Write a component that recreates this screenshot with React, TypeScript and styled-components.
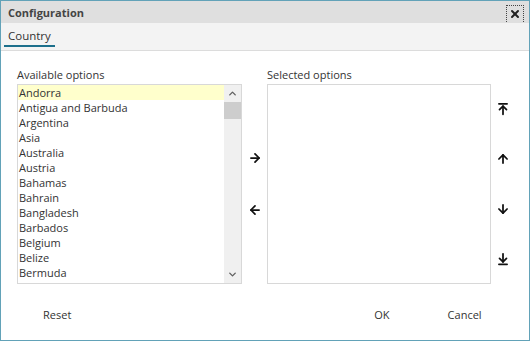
import React from 'react'
import styled, { createGlobalStyle } from 'styled-components'
import { ArrowRight, ArrowLeft, ArrowUp, ArrowDown, ArrowUpToLine, ArrowDownToLine, X, ChevronUp, ChevronDown } from 'lucide-react'

const GlobalStyle = createGlobalStyle`
  body {
    margin: 0;
    font-family: "Open Sans", "Liberation Sans", sans-serif;
    color: #333;
  }
  * { box-sizing: border-box; }
`

const Dialog = styled.div`
  width: 530px;
  height: 341px;
  border: 1px solid #62a2b8;
  background: #fff;
  display: flex;
  flex-direction: column;
`

const TitleBar = styled.div`
  height: 22px;
  background: #dfdfdf;
  display: flex;
  align-items: center;
  justify-content: space-between;
  padding: 0 5px 0 7px;
  font-size: 11px;
  font-weight: bold;
  color: #444;
`

const CloseButton = styled.button`
  width: 18px;
  height: 19px;
  margin-top: 4px;
  border: 1px dotted #444;
  background: transparent;
  display: flex;
  align-items: center;
  justify-content: center;
  padding: 0;
  color: #222;
`

const TabBar = styled.div`
  height: 28px;
  background: #f3f3f3;
  border-bottom: 1px solid #dcdcdc;
  display: flex;
  align-items: flex-end;
  padding-left: 3px;
`

const Tab = styled.div`
  font-size: 11.5px;
  padding: 0 4px 1px;
  margin-bottom: 3px;
  border-bottom: 2px solid #1c6f8b;
  color: #333;
  line-height: 16px;
`

const Body = styled.div`
  display: flex;
  padding: 17px 0 0 16px;
`

const Column = styled.div`
  display: flex;
  flex-direction: column;
`

const Label = styled.div`
  font-size: 11px;
  line-height: 14px;
  height: 16px;
  color: #333;
`

const ListBox = styled.div<{ $width: number }>`
  width: ${p => p.$width}px;
  height: 200px;
  border: 1px solid #d8d8d8;
  display: flex;
  overflow: hidden;
`

const Items = styled.div`
  flex: 1;
  display: flex;
  flex-direction: column;
`

const Item = styled.div<{ $active?: boolean }>`
  height: 15px;
  line-height: 15px;
  font-size: 11px;
  padding-left: 1px;
  white-space: nowrap;
  background: ${p => (p.$active ? '#ffffcc' : 'transparent')};
  color: #333;
`

const Scrollbar = styled.div`
  width: 17px;
  background: #f0f0f0;
  display: flex;
  flex-direction: column;
  align-items: center;
  color: #606060;
`

const ScrollArrow = styled.div`
  height: 17px;
  width: 17px;
  display: flex;
  align-items: center;
  justify-content: center;
`

const Thumb = styled.div`
  width: 17px;
  height: 17px;
  background: #cdcdcd;
`

const ScrollSpace = styled.div`
  flex: 1;
`

const MoveColumn = styled.div`
  width: 25px;
  margin-top: 16px;
  height: 200px;
  display: flex;
  flex-direction: column;
  align-items: center;
  justify-content: center;
  gap: 38px;
  color: #111;
`

const OrderColumn = styled.div`
  width: 24px;
  margin-top: 16px;
  height: 200px;
  display: flex;
  flex-direction: column;
  align-items: center;
  padding-top: 18px;
  gap: 36px;
  color: #111;
`

const Footer = styled.div`
  display: flex;
  align-items: center;
  margin-top: 20px;
  height: 20px;
  font-size: 11px;
`

const FooterButton = styled.button<{ $ml: number }>`
  margin-left: ${p => p.$ml}px;
  background: transparent;
  border: none;
  padding: 0;
  font-family: "Open Sans", "Liberation Sans", sans-serif;
  font-size: 11px;
  color: #333;
`

const countries = [
  'Andorra',
  'Antigua and Barbuda',
  'Argentina',
  'Asia',
  'Australia',
  'Austria',
  'Bahamas',
  'Bahrain',
  'Bangladesh',
  'Barbados',
  'Belgium',
  'Belize',
  'Bermuda',
]

const App = () => {
  return (
    <>
      <GlobalStyle />
      <Dialog>
        <TitleBar>
          <span>Configuration</span>
          <CloseButton>
            <X size={12} strokeWidth={4} />
          </CloseButton>
        </TitleBar>
        <TabBar>
          <Tab>Country</Tab>
        </TabBar>
        <Body>
          <Column>
            <Label>Available options</Label>
            <ListBox $width={225}>
              <Items>
                {countries.map((c, i) => (
                  <Item key={c} $active={i === 0}>{c}</Item>
                ))}
              </Items>
              <Scrollbar>
                <ScrollArrow><ChevronUp size={11} strokeWidth={3} /></ScrollArrow>
                <Thumb />
                <ScrollSpace />
                <ScrollArrow><ChevronDown size={11} strokeWidth={3} /></ScrollArrow>
              </Scrollbar>
            </ListBox>
          </Column>
          <MoveColumn>
            <ArrowRight size={14} strokeWidth={3} />
            <ArrowLeft size={14} strokeWidth={3} />
          </MoveColumn>
          <Column>
            <Label>Selected options</Label>
            <ListBox $width={224} />
          </Column>
          <OrderColumn>
            <ArrowUpToLine size={14} strokeWidth={3} />
            <ArrowUp size={14} strokeWidth={3} />
            <ArrowDown size={14} strokeWidth={3} />
            <ArrowDownToLine size={14} strokeWidth={3} />
          </OrderColumn>
        </Body>
        <Footer>
          <FooterButton $ml={42}>Reset</FooterButton>
          <FooterButton $ml={303}>OK</FooterButton>
          <FooterButton $ml={58}>Cancel</FooterButton>
        </Footer>
      </Dialog>
    </>
  )
}

export default App
